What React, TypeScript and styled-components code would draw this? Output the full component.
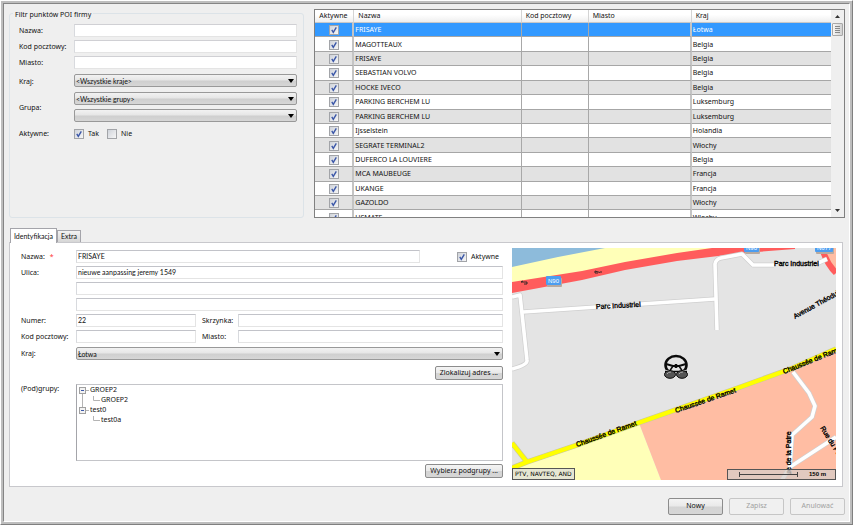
import React from "react";
import styled, { createGlobalStyle, css } from "styled-components";

const GlobalStyle = createGlobalStyle`
  *, *::before, *::after { box-sizing: border-box; }
  body { margin: 0; background: #fff; }
  body, input, select, button, table, legend {
    font-family: "Noto Sans", "Open Sans", sans-serif;
    font-size: 7px;
    line-height: 10px;
    color: #111;
  }
`;

const Outer = styled.div`
  height: 100vh;
  min-height: 480px;
  display: flex;
  border-top: 1px solid #fff;
  border-left: 1px solid #fff;
  border-right: 1px solid #808080;
  border-bottom: 1px solid #808080;
`;

const Bevel = styled.div`
  flex: 1;
  min-width: 0;
  display: flex;
  border: 2px solid #bebebe;
`;

const Window = styled.main`
  flex: 1;
  min-width: 0;
  display: flex;
  flex-direction: column;
  padding: 5px 4px 6px 5px;
  border-top: 1px solid #858585;
  border-left: 1px solid #858585;
  border-right: 1px solid #fff;
  border-bottom: 1px solid #fff;
  background: #efefef;
`;

const TopArea = styled.section`
  flex: 1;
  min-height: 120px;
  display: grid;
  grid-template-columns: minmax(0, 295fr) minmax(0, 530fr);
  grid-template-rows: minmax(0, 1fr);
  gap: 10px;
`;

const FilterBox = styled.section`
  margin-top: 4px;
  padding: 0 6px 0 9px;
  border: 1px solid #dce3e8;
  border-radius: 3px;
`;

const FilterTitle = styled.h2`
  display: table;
  margin: -5px 0 3px -6px;
  padding: 0 2px;
  background: #efefef;
  font-size: 7px;
  font-weight: 400;
  line-height: 12px;
`;

const FilterGrid = styled.div`
  display: grid;
  grid-template-columns: 55px minmax(0, 1fr);
  row-gap: 3px;
  align-items: center;
`;

const SelectStack = styled.div`
  display: grid;
  gap: 4px;
  margin: 1px 0;
`;

const FilterSelects = styled(SelectStack)`
  margin: 2px 0 0;
`;

const CheckRow = styled.div`
  display: flex;
  gap: 8px;
  margin-top: 3px;
`;

const Label = styled.label`
  white-space: nowrap;
`;

const LowLabel = styled(Label)`
  padding-top: 4px;
`;

const Required = styled.span`
  margin-left: 5px;
  color: #f33;
`;

const Field = styled.input<{ $framed?: boolean }>`
  display: block;
  width: 100%;
  min-width: 0;
  height: 13px;
  padding: 0 1px 1px;
  border: 1px solid #e4e4e4;
  border-top-color: ${(p) => (p.$framed ? "#c2c3c9" : "#d0d0d4")};
  border-left-color: #d8dade;
  border-radius: 0;
  outline: none;
  background: #fff;
  font-family: Lato, "Noto Sans", sans-serif;
`;

const SelectShell = styled.div`
  position: relative;
  width: 100%;
  svg {
    position: absolute;
    top: 5px;
    right: 3px;
    pointer-events: none;
  }
`;

const NativeSelect = styled.select`
  appearance: none;
  display: block;
  width: 100%;
  height: 13px;
  margin: 0;
  padding: 0 12px 0 1px;
  border: 1px solid #999;
  border-radius: 2px;
  background: linear-gradient(#f2f2f2, #e6e6e6 45%, #cfcfcf 55%, #d6d6d6);
  font-family: Lato, "Noto Sans", sans-serif;
`;

const CheckLabel = styled.label`
  display: flex;
  align-items: center;
  gap: 4px;
`;

const CheckMark = styled.span`
  display: inline-grid;
  vertical-align: top;
  width: 10px;
  height: 10px;
  > * { grid-area: 1 / 1; }
  svg { pointer-events: none; }
  input:not(:checked) + svg { display: none; }
`;

const CheckInput = styled.input`
  appearance: none;
  width: 10px;
  height: 10px;
  margin: 0;
  border: 1px solid #a2a4a8;
  background: linear-gradient(135deg, #cfd3da, #f6f6f6);
`;

const PushButton = styled.button<{ $wide?: boolean }>`
  height: ${(p) => (p.$wide ? 17 : 14)}px;
  min-width: ${(p) => (p.$wide ? 55 : 0)}px;
  padding: 0 4px 1px;
  border: 1px solid #8c8c8c;
  border-radius: 2px;
  background: linear-gradient(#f4f4f4, #e9e9e9 48%, #d4d4d4 52%, #d6d6d6);
  &:disabled {
    border-color: #c6c6c6;
    background: #f0f0f0;
    color: #a0a0a0;
  }
`;

const ListFrame = styled.div`
  min-width: 0;
  display: flex;
  border: 1px solid #808080;
  background: #fff;
`;

const ListViewport = styled.div`
  flex: 1;
  min-width: 0;
  overflow: hidden;
`;

const PoiTable = styled.table`
  width: 100%;
  height: 215px;
  table-layout: fixed;
  border-collapse: separate;
  border-spacing: 0;
`;

const Col = styled.col<{ $w?: string }>`
  width: ${(p) => p.$w ?? "auto"};
`;

const HeadCell = styled.th`
  height: 13px;
  padding: 0 4px;
  border-right: 1px solid #d4d4d4;
  border-bottom: 1px solid #c8c8c8;
  background: linear-gradient(#fff 40%, #eee);
  font-weight: 400;
  text-align: left;
  white-space: nowrap;
  &:last-child { border-right: 0; }
`;

const cellTone = css<{ $selected?: boolean }>`
  background: ${(p) => (p.$selected ? "#3399ff" : "#fff")};
  color: ${(p) => (p.$selected ? "#fff" : "#111")};
`;

const Row = styled.tr<{ $selected?: boolean }>`
  ${cellTone}
  &:nth-child(odd) { ${(p) => !p.$selected && "background: #e2e2e2;"} }
`;

const Cell = styled.td<{ $strong?: boolean; $center?: boolean }>`
  padding: 1px ${(p) => (p.$center ? 0 : 1)}px 0;
  border-right: ${(p) => (p.$strong ? "2px solid #c4c4c4" : "1px solid #a8a8a8")};
  border-bottom: 1px solid #a6a6a6;
  text-align: ${(p) => (p.$center ? "center" : "left")};
  line-height: 10px;
  white-space: nowrap;
  overflow: hidden;
  &:last-child { border-right: 0; }
`;

const ScrollTrack = styled.div`
  flex: none;
  width: 13px;
  display: flex;
  flex-direction: column;
  align-items: center;
  background: #efefef;
  > svg { flex: none; margin: 5px 0; }
`;

const ScrollThumb = styled.div`
  width: 11px;
  height: 13px;
  display: grid;
  place-items: center;
  margin-bottom: auto;
  border: 1px solid #a8a8a8;
  border-radius: 1px;
  background: linear-gradient(90deg, #f6f6f6, #d2d2d2);
`;

const TabBar = styled.div`
  display: flex;
  align-items: flex-end;
  height: 14px;
  margin-top: 10px;
  padding-left: 1px;
`;

const Tab = styled.button<{ $active?: boolean }>`
  position: relative;
  z-index: ${(p) => (p.$active ? 1 : 0)};
  height: ${(p) => (p.$active ? 15 : 12)}px;
  margin: 0 0 ${(p) => (p.$active ? -1 : 0)}px;
  padding: 0 3px 1px;
  border: 1px solid #a4a4aa;
  border-bottom: 0;
  background: ${(p) => (p.$active ? "#fff" : "linear-gradient(#f2f2f2, #d6d6d6)")};
  font-family: Lato, "Noto Sans", sans-serif;
`;

const Panel = styled.section`
  display: grid;
  grid-template-columns: minmax(0, 482fr) minmax(0, 324fr);
  column-gap: 9px;
  margin-right: 2px;
  padding: 5px 6px 6px 11px;
  border: 1px solid #c8c8cc;
  background: #fff;
`;

const Form = styled.form`
  display: grid;
  grid-template-columns: 55px minmax(0, 1fr);
  row-gap: 3px;
  align-items: center;
  align-content: start;
  padding-top: 2px;
`;

const NameRow = styled.div`
  display: grid;
  grid-template-columns: minmax(0, 1fr) 83px;
  align-items: center;
  > label { justify-self: end; margin-right: 4px; }
`;

const PairRow = styled.div`
  display: grid;
  grid-template-columns: minmax(0, 120fr) 42px minmax(0, 265fr);
  align-items: center;
  > label { padding-left: 6px; }
`;

const ActionRow = styled.div`
  grid-column: 1 / -1;
  display: flex;
  justify-content: flex-end;
`;

const SpacedAction = styled(ActionRow)`
  margin: 2px 0 1px;
`;

const TopLabel = styled.span`
  align-self: start;
`;

const TreeBox = styled.div`
  min-height: 77px;
  padding: 0 2px;
  border: 1px solid #c4c5c9;
  border-left-color: #a4a5aa;
`;

const TreeList = styled.ul`
  margin: 0;
  padding: 0;
  list-style: none;
`;

const TreeItem = styled.li`
  display: flex;
  align-items: center;
  height: 10px;
  svg { flex: none; display: block; }
`;

const MapBox = styled.div`
  position: relative;
  min-height: 232px;
  overflow: hidden;
  background: #e4e4e4;
`;

const MapDrawing = styled.svg`
  position: absolute;
  inset: 0;
  width: 100%;
  height: 100%;
  font-family: "Liberation Sans", sans-serif;
  font-size: 7px;
`;

const Credits = styled.div`
  position: absolute;
  left: 0;
  bottom: 0;
  height: 12px;
  padding: 0 2px;
  border: 1px solid #555;
  background: #e6e6d2;
  font: 6px/10px "DejaVu Sans", sans-serif;
  color: #000;
  white-space: nowrap;
`;

const ScaleBox = styled.div`
  position: absolute;
  right: 0;
  bottom: 0;
  width: 109px;
  height: 11px;
  display: flex;
  align-items: center;
  justify-content: space-between;
  padding: 0 9px 0 11px;
  border: 1px solid #555;
  background: rgba(215, 205, 200, 0.75);
  font: 700 6px/9px "Liberation Sans", sans-serif;
  color: #000;
`;

const Footer = styled.footer`
  display: flex;
  justify-content: flex-end;
  gap: 6px;
  margin: 11px 0 0;
`;

function Check({ id, checked, label }: { id?: string; checked?: boolean; label?: string }) {
  return (
    <CheckMark>
      <CheckInput type="checkbox" id={id} defaultChecked={checked} aria-label={label} />
      <svg width="10" height="10" viewBox="0 0 10 10">
        <path d="M2.8 4.8 4.3 7.3 7.3 2.3" fill="none" stroke="#3b57a8" strokeWidth="1.4" />
      </svg>
    </CheckMark>
  );
}

function Select({ id, value, label }: { id: string; value: string; label?: string }) {
  return (
    <SelectShell>
      <NativeSelect id={id} aria-label={label} defaultValue={value}>
        <option value={value}>{value}</option>
      </NativeSelect>
      <svg width="6" height="4" viewBox="0 0 6 4"><path d="M0 0H6L3 4Z" fill="#000" /></svg>
    </SelectShell>
  );
}

const pois: [string, string][] = [
  ["FRISAYE", "Łotwa"],
  ["MAGOTTEAUX", "Belgia"],
  ["FRISAYE", "Belgia"],
  ["SEBASTIAN VOLVO", "Belgia"],
  ["HOCKE IVECO", "Belgia"],
  ["PARKING BERCHEM LU", "Luksemburg"],
  ["PARKING BERCHEM LU", "Luksemburg"],
  ["Ijsselstein", "Holandia"],
  ["SEGRATE TERMINAL2", "Włochy"],
  ["DUFERCO LA LOUVIERE", "Belgia"],
  ["MCA MAUBEUGE", "Francja"],
  ["UKANGE", "Francja"],
  ["GAZOLDO", "Włochy"],
  ["USMATE", "Włochy"],
];

function PoiList() {
  return (
    <ListFrame>
      <ListViewport>
        <PoiTable>
          <colgroup>
            <Col $w="39px" />
            <Col />
            <Col $w="13%" />
            <Col $w="20%" />
            <Col $w="27%" />
          </colgroup>
          <thead>
            <tr>
              {["Aktywne", "Nazwa", "Kod pocztowy", "Miasto", "Kraj"].map((h) => (
                <HeadCell key={h} scope="col">{h}</HeadCell>
              ))}
            </tr>
          </thead>
          <tbody>
            {pois.map(([name, country], i) => (
              <Row key={i} $selected={i === 0}>
                <Cell $strong $center><Check checked label={`Aktywne ${name}`} /></Cell>
                <Cell>{name}</Cell>
                <Cell />
                <Cell $strong />
                <Cell>{country}</Cell>
              </Row>
            ))}
          </tbody>
        </PoiTable>
      </ListViewport>
      <ScrollTrack>
        <svg width="5" height="3" viewBox="0 0 5 3"><path d="M0 3H5L2.5 0Z" fill="#333" /></svg>
        <ScrollThumb>
          <svg width="5" height="7" viewBox="0 0 5 7"><path d="M0 .5H5M0 2.5H5M0 4.5H5M0 6.5H5" stroke="#888" /></svg>
        </ScrollThumb>
        <svg width="5" height="3" viewBox="0 0 5 3"><path d="M0 0H5L2.5 3Z" fill="#333" /></svg>
      </ScrollTrack>
    </ListFrame>
  );
}

function BranchIcon({ first }: { first?: boolean }) {
  return (
    <svg width="11" height="10" viewBox="0 0 11 10">
      <path d={first ? "M3.5 8V10M7 5.5H10" : "M3.5 0V2M7 5.5H10"} stroke="#b4b4b4" fill="none" />
      <rect x=".5" y="2.5" width="6" height="6" fill="#f2f2f2" stroke="#a0a0a0" />
      <path d="M2 5.5H5" stroke="#3b57a8" />
    </svg>
  );
}

function LeafIcon({ through }: { through?: boolean }) {
  return (
    <svg width="22" height="10" viewBox="0 0 22 10">
      <path d={`M14.5 1V5.5H21${through ? "M3.5 0V10" : ""}`} stroke="#b4b4b4" fill="none" />
    </svg>
  );
}

function GroupTree() {
  return (
    <TreeBox>
      <TreeList aria-label="(Pod)grupy">
        <TreeItem><BranchIcon first />GROEP2</TreeItem>
        <TreeItem><LeafIcon through />GROEP2</TreeItem>
        <TreeItem><BranchIcon />test0</TreeItem>
        <TreeItem><LeafIcon />test0a</TreeItem>
      </TreeList>
    </TreeBox>
  );
}

const whiteRoads = [
  "M0 49 8 47 15 112Q16 117 0 121",
  "M11 64 203 51",
  "M205 82 203 16Q204 11 209 10L230 6 241 17H262",
  "M306 15 315 11",
  "M281 124 297 145 303 158 300 169 280 187 278 219",
  "M324 189 278 219 270 232",
];

const yellowRoads = ["M0 195 15 214", "M0 220 15 214 65 197 126 175 223 141 281 120 324 101"];

const streetNames: { x: number; y: number; turn: number; text: string }[] = [
  { x: 84, y: 61, turn: -3, text: "Parc Industriel" },
  { x: 262, y: 18, turn: 0, text: "Parc Industriel" },
  { x: 283, y: 71, turn: -29, text: "Avenue Théodule" },
  { x: 65, y: 199, turn: -20, text: "Chaussée de Ramet" },
  { x: 164, y: 165, turn: -19, text: "Chaussée de Ramet" },
  { x: 272, y: 126, turn: -22, text: "Chaussée de Ramet" },
  { x: 279, y: 227, turn: -90, text: "ue de la Patre" },
  { x: 308, y: 180, turn: 58, text: "Rue du Parc" },
];

const shields = [
  { x: 34, y: 28, text: "N90" },
  { x: 232, y: -5, text: "N90" },
  { x: 303, y: -5, text: "N677" },
];

function MapView() {
  return (
    <MapBox>
      <MapDrawing viewBox="0 0 324 232" preserveAspectRatio="xMidYMid slice" role="img" aria-label="Mapa">
        <rect width="324" height="232" fill="#e4e4e4" />
        <path d="M0 0H203L163 8 0 40Z" fill="#ffffb8" />
        <path d="M0 0H93L46 9 0 19Z" fill="#8dbbdb" />
        <path d="M0 34 70 23 113 14 165 5 200 0H283V1L231 5 165 13 113 22 70 32 0 45Z" fill="#ff5c5c" />
        <path d="M309 0H324V26Z" fill="#ffbda3" />
        <path d="M311 3Q315 16 324 25" fill="none" stroke="#ff5c5c" strokeWidth="6" />
        <path d="M0 220 15 214 127 175 149 232H0Z" fill="#ffffb8" />
        <path d="M127 175 223 141 281 120 324 101V232H149Z" fill="#ffbda3" />
        <g fill="none" strokeLinejoin="round">
          {whiteRoads.map((d) => <path key={d} d={d} stroke="#cfcfcf" strokeWidth="5" />)}
          {whiteRoads.map((d) => <path key={d} d={d} stroke="#fff" strokeWidth="3.6" />)}
          {yellowRoads.map((d) => <path key={d} d={d} stroke="#c8c8a0" strokeWidth="5.4" />)}
          {yellowRoads.map((d) => <path key={d} d={d} stroke="#ffff00" strokeWidth="4.2" />)}
        </g>
        <g fill="none" stroke="#222" strokeWidth=".9">
          <path d="M9 34H15M9 34 11 33M12 36H15V34" />
          <path d="M83 23 88 24.500M83 23V25H86M88 24H90" />
        </g>
        {shields.map((s) => (
          <g key={s.x}>
            <rect x={s.x + 1} y={s.y + 2} width={s.text.length * 3 + 6} height="9" rx="1" fill="#b8aaa0" />
            <rect x={s.x} y={s.y} width={s.text.length * 3 + 6} height="9" rx="1" fill="#4c9df0" />
            <text x={s.x + 2} y={s.y + 7} fill="#fff" fontSize="6">{s.text}</text>
          </g>
        ))}
        {streetNames.map((s) => (
          <text
            key={`${s.x}-${s.y}`}
            transform={`translate(${s.x} ${s.y}) rotate(${s.turn})`}
            fill="#000"
            stroke="#000"
            strokeWidth=".35"
          >
            {s.text}
          </text>
        ))}
        <g fill="none" stroke="#0a0a0a">
          <ellipse cx="164" cy="117" rx="10.500" ry="9" strokeWidth="2.6" />
          <path d="M154 116 161 118H167L174 116" strokeWidth="2" />
          <circle cx="164" cy="118" r="1.600" fill="#0a0a0a" />
          <rect x="151" y="122" width="26" height="9" fill="#e4e4e4" stroke="none" />
          <path d="M161 118 157 124M167 118 171 124M153 123.500H175" strokeWidth="1.500" />
          <ellipse cx="158" cy="126.500" rx="5.500" ry="3.800" fill="#555" />
          <ellipse cx="170" cy="126.500" rx="5.500" ry="3.800" fill="#555" />
          <path d="M155 126Q156 124 159 124M167 126Q168 124 171 124" stroke="#aaa" />
        </g>
      </MapDrawing>
      <Credits>PTV, NAVTEQ, AND</Credits>
      <ScaleBox>
        <svg width="59" height="5" viewBox="0 0 59 5"><path d="M.5 0V5M58.5 0V5M0 2.500H59" stroke="#444" fill="none" /></svg>
        150 m
      </ScaleBox>
    </MapBox>
  );
}

export default function App() {
  return (
    <Outer>
      <GlobalStyle />
      <Bevel>
        <Window>
          <TopArea>
            <FilterBox aria-labelledby="filter-title">
              <FilterTitle id="filter-title">Filtr punktów POI firmy</FilterTitle>
              <FilterGrid>
                <Label htmlFor="f-name">Nazwa:</Label>
                <Field id="f-name" />
                <Label htmlFor="f-zip">Kod pocztowy:</Label>
                <Field id="f-zip" />
                <Label htmlFor="f-city">Miasto:</Label>
                <Field id="f-city" />
                <LowLabel htmlFor="f-country">Kraj:</LowLabel>
                <FilterSelects><Select id="f-country" value="<Wszystkie kraje>" /></FilterSelects>
                <LowLabel htmlFor="f-group">Grupa:</LowLabel>
                <FilterSelects>
                  <Select id="f-group" value="<Wszystkie grupy>" />
                  <Select id="f-subgroup" value="" label="Podgrupa" />
                </FilterSelects>
                <LowLabel as="span">Aktywne:</LowLabel>
                <CheckRow>
                  <CheckLabel><Check checked />Tak</CheckLabel>
                  <CheckLabel><Check />Nie</CheckLabel>
                </CheckRow>
              </FilterGrid>
            </FilterBox>
            <PoiList />
          </TopArea>

          <TabBar role="tablist">
            <Tab $active role="tab" aria-selected="true">Identyfikacja</Tab>
            <Tab role="tab" aria-selected="false">Extra</Tab>
          </TabBar>
          <Panel role="tabpanel">
            <Form onSubmit={(e) => e.preventDefault()}>
              <Label htmlFor="name">Nazwa:<Required>*</Required></Label>
              <NameRow>
                <Field $framed id="name" defaultValue="FRISAYE" />
                <CheckLabel><Check checked />Aktywne</CheckLabel>
              </NameRow>
              <Label htmlFor="street">Ulica:</Label>
              <Field $framed id="street" defaultValue="nieuwe aanpassing jeremy 1549" />
              <span />
              <Field $framed aria-label="Ulica 2" />
              <span />
              <Field $framed aria-label="Ulica 3" />
              <Label htmlFor="number">Numer:</Label>
              <PairRow>
                <Field $framed id="number" defaultValue="22" />
                <Label htmlFor="box">Skrzynka:</Label>
                <Field $framed id="box" />
              </PairRow>
              <Label htmlFor="zip">Kod pocztowy:</Label>
              <PairRow>
                <Field $framed id="zip" />
                <Label htmlFor="city">Miasto:</Label>
                <Field $framed id="city" />
              </PairRow>
              <Label htmlFor="country">Kraj:</Label>
              <SelectStack><Select id="country" value="Łotwa" /></SelectStack>
              <SpacedAction><PushButton type="button">Zlokalizuj adres ...</PushButton></SpacedAction>
              <TopLabel>(Pod)grupy:</TopLabel>
              <GroupTree />
              <ActionRow><PushButton type="button">Wybierz podgrupy ...</PushButton></ActionRow>
            </Form>
            <MapView />
          </Panel>

          <Footer>
            <PushButton $wide type="button">Nowy</PushButton>
            <PushButton $wide type="button" disabled>Zapisz</PushButton>
            <PushButton $wide type="button" disabled>Anulować</PushButton>
          </Footer>
        </Window>
      </Bevel>
    </Outer>
  );
}
